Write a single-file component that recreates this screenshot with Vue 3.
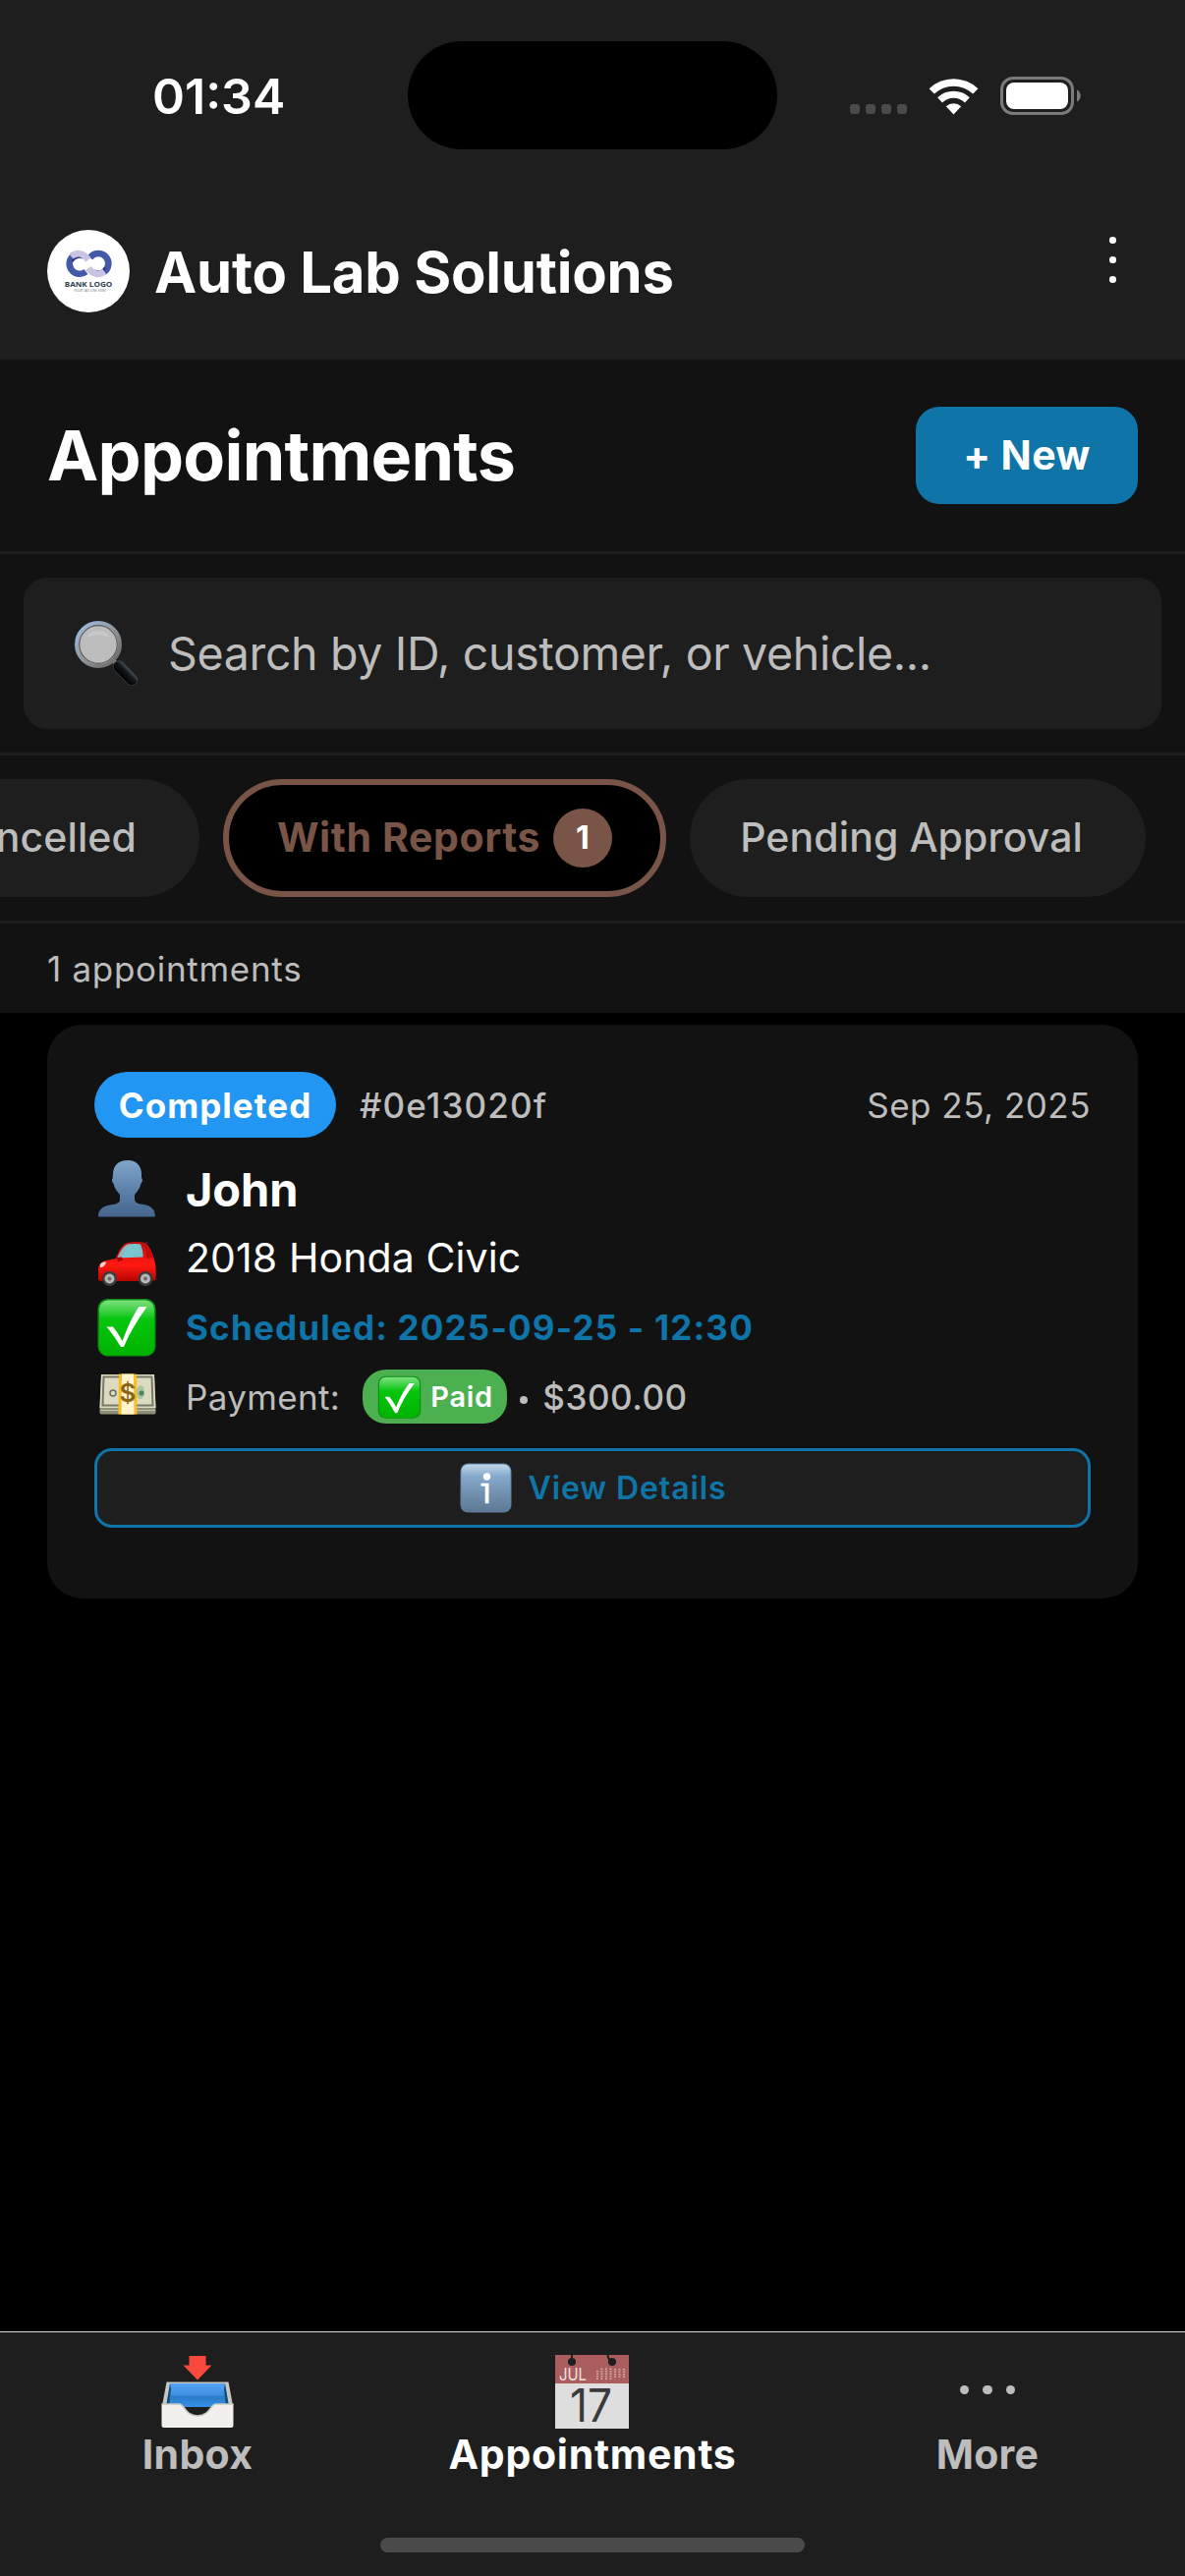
<script setup>
const chips = [
  { label: 'Cancelled' },
  { label: 'With Reports', count: 1, active: true },
  { label: 'Pending Approval' }
]
</script>

<template>
  <div class="screen">
    <div class="status">
      <span class="t time">01:34</span>
      <div class="island"></div>
      <div class="indicators">
        <div class="cell"><i></i><i></i><i></i><i></i></div>
        <svg class="wifi" viewBox="0 0 51 38">
          <path d="M0.6 11.2a36 36 0 0 1 49.8 0L45.2 16.6a28.5 28.5 0 0 0-39.4 0z" fill="#fff" />
          <path d="M9.2 20.2a23.5 23.5 0 0 1 32.6 0L37 25.4a16.5 16.5 0 0 0-23 0z" fill="#fff" />
          <path d="M17.8 29.2a11.4 11.4 0 0 1 15.4 0L25.5 37.4z" fill="#fff" />
        </svg>
        <svg class="battery" viewBox="0 0 82 39">
          <rect x="1.5" y="1.5" width="72" height="36" rx="11.5" fill="none" stroke="#7b7b7b" stroke-width="3" />
          <rect x="6" y="6" width="63" height="27" rx="8" fill="#fff" />
          <path d="M78 13.5c5 2 5 10 0 12z" fill="#7b7b7b" />
        </svg>
      </div>
    </div>

    <header class="brand">
      <svg class="logo" viewBox="0 0 84 84">
        <circle cx="42" cy="42" r="42" fill="#fff" />
        <g fill="none" stroke-width="6.6">
          <path d="M26.500 26.500A10.300 10.300 0 1 0 39.500 42.500" stroke="#4459a8" />
          <path d="M25.500 32c2-4 7-5.500 11-3.500" stroke="#2b3580" stroke-width="2.500" />
          <path d="M43.500 28.500A10.300 10.300 0 1 1 57.500 43" stroke="#4459a8" />
          <path d="M48 41.500c5 2.500 9 1 11-3" stroke="#2b3580" stroke-width="2.500" />
          <path d="M24.500 27C31 21.500 37.500 24.500 42 30.500" stroke="#c9c4e3" />
          <path d="M42 39C46 44.500 52 47 58.500 42.800" stroke="#c9c4e3" />
        </g>
        <text x="17.700" y="58.300" class="logo-name" textLength="48.600" lengthAdjust="spacingAndGlyphs">BANK LOGO</text>
        <text x="27" y="62.900" class="logo-tag" textLength="33" lengthAdjust="spacingAndGlyphs">YOUR TAG LINE HERE</text>
      </svg>
      <h1 class="t brand-name">Auto Lab Solutions</h1>
      <div class="kebab"><i></i><i></i><i></i></div>
    </header>

    <section class="title-bar">
      <h2 class="t">Appointments</h2>
      <button class="new"><span class="t">+ New</span></button>
    </section>

    <section class="search-bar">
      <div class="search">
        <svg class="lens" viewBox="0 0 66 66">
          <defs>
            <linearGradient id="rim" x1="0" y1="0" x2="1" y2="1"><stop offset="0" stop-color="#9cc3ea" /><stop offset=".5" stop-color="#8e959c" /><stop offset="1" stop-color="#6a625c" /></linearGradient>
            <linearGradient id="grip" x1="0" y1="1" x2="1" y2="0"><stop offset=".2" stop-color="#000" /><stop offset=".6" stop-color="#15181b" /><stop offset=".8" stop-color="#454b51" /></linearGradient>
          </defs>
          <path d="M39 40l6 6" stroke="#8b8f93" stroke-width="4" />
          <path d="M45 46.500L58 60" stroke="#39414a" stroke-width="12.500" stroke-linecap="round" />
          <path d="M45 46.500L58 60" stroke="url(#grip)" stroke-width="11" stroke-linecap="round" />
          <circle cx="24" cy="24" r="22" fill="#bdbdbd" stroke="url(#rim)" stroke-width="4" />
          <circle cx="24" cy="24" r="19.300" fill="none" stroke="#5a5a5a" stroke-width="1.200" />
          <path d="M12 17c5-9 19-9 24 0-7-4-17-4-24 0z" fill="#c9c9c9" />
        </svg>
        <span class="t placeholder">Search by ID, customer, or vehicle...</span>
      </div>
    </section>

    <nav class="filters">
      <div v-for="c in chips" :key="c.label" class="chip" :class="{ active: c.active }">
        <span class="t">{{ c.label }}</span>
        <b v-if="c.count" class="count"><span class="t">{{ c.count }}</span></b>
      </div>
    </nav>

    <div class="total"><span class="t">1 appointments</span></div>

    <main class="list">
      <article class="card">
        <div class="card-head">
          <span class="state"><span class="t">Completed</span></span>
          <span class="t ident">#0e13020f</span>
          <span class="t date">Sep 25, 2025</span>
        </div>
        <div class="row">
          <svg class="emo" viewBox="0 0 60 60">
            <defs><linearGradient id="bust" x1="0" y1="0" x2="0" y2="1"><stop offset="0" stop-color="#7fa6c9" /><stop offset=".6" stop-color="#587da6" /><stop offset="1" stop-color="#46658c" /></linearGradient></defs>
            <path d="M31 1c9 0 14 6 14 14 0 2 0 3 .3 4.500 1.200.5.700 4-1 5.500-1 5-4 8-6.300 11v5.500c1 3 4 4 9 4.500 7 1 12 4.500 12 12.500H1C1 51 6 47.500 13 46.500c5-.5 9-1.500 10-4.500v-6c-2.500-3-5.300-6-6.300-11-1.700-1.500-2.200-5-1-5.500C15.500 18 16 17 16 15 16 7 21 1 31 1z" fill="url(#bust)" />
          </svg>
          <span class="t name">John</span>
        </div>
        <div class="row">
          <svg class="emo car" viewBox="0 0 60 46">
            <defs><linearGradient id="body" x1="0" y1="0" x2="0" y2="1"><stop offset="0" stop-color="#b90d0b" /><stop offset=".35" stop-color="#e9140f" /><stop offset=".6" stop-color="#ff1a10" /><stop offset="1" stop-color="#b50500" /></linearGradient></defs>
            <path d="M49 4l2-3" stroke="#444" stroke-width="1" />
            <path d="M1 40V30c0-6 3-9 8-10l10-2C22 10 25 4 30 2c5-1.500 15-1.500 19 0 4 3 7 10 9 17 2 6 2 15 1.500 21l-6 1H4z" fill="url(#body)" />
            <path d="M20.500 17.500C23 11 27 5 31 3.500c4-.8 10-.8 13 0 2 4 2.500 9 2.500 13z" fill="#79c6cf" />
            <path d="M20.500 17.500C23 11 27 5 31 3.500L35 3c-6 3-9 9-10 14z" fill="#a9a9a9" opacity=".6" />
            <path d="M48.500 4c5 3 7 9 8 13l-7 1c0-5 0-10-1-14z" fill="#c30c09" />
            <path d="M3 24c1-2 4-3 6-2-1 3-3 5-6 5z" fill="#ffd7d2" />
            <path d="M20 17l5-.5 1 3-5 2z" fill="#a00" />
            <g fill="#3c3c3c"><circle cx="12.500" cy="38.500" r="7.500" /><circle cx="49" cy="38.500" r="7.500" /></g>
            <g fill="#b7b7b7"><circle cx="12.500" cy="38.500" r="5" /><circle cx="49" cy="38.500" r="5" /></g>
            <g fill="#6d6d6d"><circle cx="12.500" cy="38.500" r="2" /><circle cx="49" cy="38.500" r="2" /></g>
          </svg>
          <span class="t vehicle">2018 Honda Civic</span>
        </div>
        <div class="row">
          <svg class="emo" viewBox="0 0 60 60">
            <defs>
              <linearGradient id="green" x1="0" y1="0" x2="0" y2="1"><stop offset="0" stop-color="#7fe07f" /><stop offset=".22" stop-color="#33cf3b" /><stop offset=".34" stop-color="#06c60d" /><stop offset="1" stop-color="#00b300" /></linearGradient>
            </defs>
            <rect x=".5" y="1" width="59" height="58.500" rx="10" fill="#0a8f14" />
            <rect x="2" y="2.500" width="56" height="56" rx="9" fill="url(#green)" />
            <path d="M9.500 29.500h6.500c4 4.500 6.500 9 9.500 14.500C30.500 31 36 18 42.500 9h8C40.500 23 32.500 36.500 27 50h-3C19.500 43 15 36 9.500 29.500z" fill="#fff" />
          </svg>
          <span class="t scheduled">Scheduled: 2025-09-25 - 12:30</span>
        </div>
        <div class="row">
          <svg class="emo cash" viewBox="0 0 58 42">
            <path d="M2 1h54l1.500 34v5q0 1.500-2 1.500H2.500Q.5 41.500.5 40V35z" fill="#8d8f78" />
            <path d="M2 1h54l1.500 34H.5z" fill="#dcdac0" />
            <path d="M4.500 3.500h49l1 29h-51z" fill="none" stroke="#77796a" stroke-width="2" />
            <circle cx="14" cy="20" r="3" fill="none" stroke="#6b6e60" stroke-width="1.500" />
            <ellipse cx="42" cy="19" rx="4" ry="7" fill="#a9c4a1" /><circle cx="43" cy="20" r="2.600" fill="#4c8560" />
            <path d="M1 37.500h56" stroke="#c3c2aa" stroke-width="1" />
            <path d="M20 .5h18l.5 41h-19z" fill="#f7bf1d" />
            <path d="M23 .5h12l.5 41h-13z" fill="#fff4cf" />
            <text x="29" y="29" class="cash-sign">$</text>
          </svg>
          <span class="t pay">Payment:</span>
          <span class="paid">
            <svg class="tick" viewBox="0 0 60 60">
              <rect x=".5" y="1" width="59" height="58.500" rx="10" fill="#0a8f14" />
              <rect x="2" y="2.500" width="56" height="56" rx="9" fill="url(#green)" />
              <path d="M9.500 29.500h6.500c4 4.500 6.500 9 9.500 14.500C30.500 31 37 19 44 11h7C41 24 32.500 38 27 52h-3C19.500 44 15 37 9.500 29.500z" fill="#fff" />
            </svg>
            <span class="t">Paid</span>
          </span>
          <i class="bullet"></i>
          <span class="t amount">$300.00</span>
        </div>
        <button class="details">
          <svg class="info" viewBox="0 0 53 51">
            <defs><linearGradient id="steel" x1="0" y1="0" x2="0" y2="1"><stop offset="0" stop-color="#c3d8ea" /><stop offset=".25" stop-color="#86a9cc" /><stop offset="1" stop-color="#5c7894" /></linearGradient></defs>
            <rect x=".5" y=".5" width="52" height="50" rx="8" fill="#5f7f9f" />
            <rect x="1.500" y="1.500" width="50" height="48" rx="7" fill="url(#steel)" />
            <circle cx="27.500" cy="14" r="3.700" fill="#fff" />
            <path d="M21.500 20.800h8v20.500h-3.800V23.800h-4.200z" fill="#fff" />
          </svg>
          <span class="t">View Details</span>
        </button>
      </article>
    </main>

    <footer class="tabs">
      <div class="tab">
        <svg class="tab-icon" viewBox="0 0 76 76">
          <defs><linearGradient id="tray" x1="0" y1="0" x2="0" y2="1"><stop offset="0" stop-color="#55a4f7" /><stop offset=".5" stop-color="#3f8fe0" /><stop offset=".55" stop-color="#2a7cc6" /><stop offset="1" stop-color="#3490e8" /></linearGradient></defs>
          <path d="M29.500 1h17v9.500h6L38 25.500 23.500 10.500h6z" fill="#f9493d" />
          <path d="M6.500 27.500h63l4.500 24H2z" fill="#c9c6bf" />
          <path d="M10 29h56l4 24H6z" fill="url(#tray)" />
          <path d="M10 29L6 53h3l2-18zM66 29l4 24h-3l-2-18z" fill="#134a7c" />
          <path d="M1.500 50H20c5 1 6 12 18 12s13-11 18-12h18.500v21.500q0 2.500-2.500 2.500H4q-2.500 0-2.500-2.500z" fill="#f1f0ed" />
          <path d="M1.500 50H20c5 1 6 12 18 12s13-11 18-12h18.500" fill="none" stroke="#c8c6c0" stroke-width="1.500" />
        </svg>
        <span class="t">Inbox</span>
      </div>
      <div class="tab on">
        <svg class="tab-icon" viewBox="0 0 76 76">
          <path d="M0 0h75v75H0z" fill="#dedede" />
          <path d="M0 0h75v29.500H0z" fill="#ab5e5e" />
          <path d="M0 29.500h75" stroke="#e9dada" stroke-width="1" />
          <g fill="#1e1e1e"><circle cx="17" cy="7" r="4" /><circle cx="58" cy="7" r="4" /></g>
          <path d="M17 0v6M53.500 0q0 4 3.500 6" stroke="#1e1e1e" stroke-width="2" fill="none" />
          <text x="4" y="25.500" class="cal-month" textLength="28" lengthAdjust="spacingAndGlyphs">JUL</text>
          <path d="M43 25V15M47.500 25V13M52 25V13M56.500 25V13M61 23V13M65.500 23V13M70 23V13" stroke="#d3a5a5" stroke-width="2" stroke-dasharray="1.500 1" />
          <text x="36.500" y="67.500" class="cal-day" textLength="43" lengthAdjust="spacingAndGlyphs">17</text>
        </svg>
        <span class="t">Appointments</span>
      </div>
      <div class="tab">
        <div class="tab-icon more"><i></i><i></i><i></i></div>
        <span class="t">More</span>
      </div>
      <div class="home"></div>
    </footer>
  </div>
</template>

<style>
body { background: #000; }
</style>
<style scoped>
* { box-sizing: border-box; margin: 0; }
.screen { width: 1206px; height: 2622px; display: flex; flex-direction: column; background: #000; color: #fff; font-family: Inter, "Liberation Sans", sans-serif; overflow: hidden; }
.t { display: block; white-space: nowrap; flex: none; line-height: 1; }
svg { display: block; flex: none; }
button { font: inherit; color: inherit; padding: 0; }

.status { height: 186px; background: #1e1e1e; position: relative; flex: none; }
.time { position: absolute; left: 155px; top: 73px; font-size: 50px; font-weight: 600; }
.island { position: absolute; left: 415px; top: 42px; width: 376px; height: 110px; border-radius: 55px; background: #000; }
.indicators { position: absolute; left: 865px; top: 78px; height: 39px; display: flex; align-items: flex-start; }
.cell { display: flex; gap: 6px; margin-top: 28px; }
.cell i { width: 10px; height: 10px; border-radius: 3px; background: #4b4b4b; }
.wifi { width: 51px; height: 38px; margin: 1px 22px 0; }
.battery { width: 82px; height: 39px; }

.brand { height: 180px; flex: none; background: #1e1e1e; display: flex; align-items: center; padding: 0 70px 0 48px; }
.logo { width: 84px; height: 84px; }
.logo-name { font: 700 7.600px "Open Sans", sans-serif; fill: #2c4250; }
.logo-tag { font: italic 3.400px "Open Sans", sans-serif; fill: #6e7d88; }
.brand-name { font-size: 58px; font-weight: 700; margin-left: 25px; padding-top: 1px; letter-spacing: -0.22px; }
.kebab { margin-left: auto; margin-bottom: 24px; display: flex; flex-direction: column; gap: 13px; }
.kebab i { width: 7.500px; height: 7px; border-radius: 50%; background: #fff; }

.title-bar { height: 198px; flex: none; background: #121212; border-bottom: 3px solid #1e1e1e; display: flex; align-items: center; justify-content: space-between; padding: 0 48px; }
h2 { font-size: 70px; font-weight: 700; letter-spacing: -0.75px; }
.new { width: 226px; height: 99px; border: 0; border-radius: 24px; background: #0f75a8; display: flex; align-items: center; justify-content: center; font-size: 41px; font-weight: 700; letter-spacing: 0.35px; }

.search-bar { height: 205px; flex: none; background: #121212; border-bottom: 3px solid #1e1e1e; padding: 24px; }
.search { height: 154px; border-radius: 24px; background: #1e1e1e; display: flex; align-items: center; padding-left: 52px; }
.lens { width: 66px; height: 66px; }
.placeholder { margin-left: 29px; font-size: 46.500px; letter-spacing: -0.34px; color: #bdbdbd; }

.filters { height: 171px; flex: none; background: #121212; border-bottom: 3px solid #1e1e1e; display: flex; justify-content: flex-end; gap: 24px; padding: 24px 40px 24px 0; overflow: hidden; }
.chip { width: 464px; height: 120px; flex: none; border-radius: 60px; background: #1e1e1e; color: #bdbdbd; display: flex; align-items: center; justify-content: flex-end; padding: 0 64px 2px 0; font-size: 41px; font-weight: 500; letter-spacing: 0.1px; }
.chip:first-child { width: 320px; }
.chip.active { width: 451px; padding: 0; justify-content: center; background: #000; border: 6px solid #795548; color: #795548; font-weight: 700; letter-spacing: 0.6px; }
.chip.active > .t { padding-bottom: 2px; }
.count { width: 60px; height: 60px; margin-left: 13px; border-radius: 30px; background: #795548; color: #fff; display: flex; align-items: center; justify-content: center; font-size: 32px; font-weight: 700; }

.total { height: 91px; flex: none; background: #121212; display: flex; align-items: center; padding: 2px 0 0 48px; font-size: 35px; letter-spacing: 0.7px; color: #bdbdbd; }

.list { flex: 1; min-height: 0; padding: 12px 48px; }
.card { height: 584px; border-radius: 36px; background: #121212; padding: 48px; }
.card-head { height: 67px; display: flex; align-items: center; font-size: 35px; margin-bottom: 17px; }
.card-head .t { padding-top: 1px; }
.state { width: 246px; height: 67px; border-radius: 33.500px; background: #2196f3; display: flex; align-items: center; justify-content: center; font-weight: 700; letter-spacing: 1.050px; }
.ident { margin-left: 24px; font-weight: 500; letter-spacing: 1.150px; color: #bdbdbd; }
.date { margin-left: auto; letter-spacing: 0.5px; color: #bdbdbd; }
.row { height: 70.500px; display: flex; align-items: center; padding-left: 3px; }
.emo { width: 60px; height: 60px; margin-right: 30px; }
.car { height: 46px; margin-top: 10px; }
.cash { width: 58px; height: 42px; margin: 0 30px 5px 2px; }
.cash-sign { font: 600 26px Inter, sans-serif; fill: #8a6412; text-anchor: middle; }
.name { font-size: 47px; font-weight: 700; letter-spacing: -0.1px; }
.vehicle { font-size: 41px; letter-spacing: 0.1px; }
.scheduled { font-size: 35px; font-weight: 700; letter-spacing: 1.200px; color: #0f75a8; }
.pay { font-size: 35px; letter-spacing: 0.35px; color: #bdbdbd; padding-top: 1px; }
.paid { width: 147px; height: 55px; margin-left: 23px; border-radius: 24px; background: #4caf50; display: flex; align-items: center; padding-left: 15px; font-size: 29px; font-weight: 600; letter-spacing: 0.7px; }
.tick { width: 45px; height: 44px; margin-right: 9px; }
.bullet { width: 8px; height: 8px; margin: 6px 15px 0 13px; border-radius: 50%; background: #bdbdbd; }
.amount { font-size: 35px; font-weight: 500; letter-spacing: 0.55px; color: #bdbdbd; padding-top: 1px; }
.details { width: 100%; height: 81px; margin-top: 17px; border: 3px solid #0f75a8; border-radius: 18px; background: #1e1e1e; color: #0f75a8; display: flex; align-items: center; justify-content: center; padding-left: 2px; font-size: 32px; font-weight: 600; letter-spacing: 0.9px; }
.info { width: 53px; height: 51px; margin-right: 16px; }

.tabs { height: 249px; flex: none; background: #1e1e1e; border-top: 1px solid #d8d8d8; display: grid; grid-template-columns: repeat(3, 1fr); padding-top: 23px; position: relative; }
.tab { display: flex; flex-direction: column; align-items: center; color: #bdbdbd; font-size: 41px; font-weight: 700; letter-spacing: 0.3px; }
.tab.on { color: #fff; letter-spacing: 0.75px; }
.tab-icon { width: 76px; height: 76px; margin-bottom: 5px; }
.more { display: flex; align-items: center; justify-content: center; gap: 14px; }
.more i { width: 9.500px; height: 9.500px; border-radius: 50%; background: #bdbdbd; flex: none; margin-bottom: 5px; }
.cal-month { font: 400 17px Inter, sans-serif; fill: #f0e4e4; letter-spacing: 0; }
.cal-day { font: 400 46px Inter, sans-serif; fill: #3a3a3a; text-anchor: middle; letter-spacing: 0; }
.home { position: absolute; left: 387px; top: 209px; width: 432px; height: 15px; border-radius: 8px; background: #4b4b4b; }
</style>
